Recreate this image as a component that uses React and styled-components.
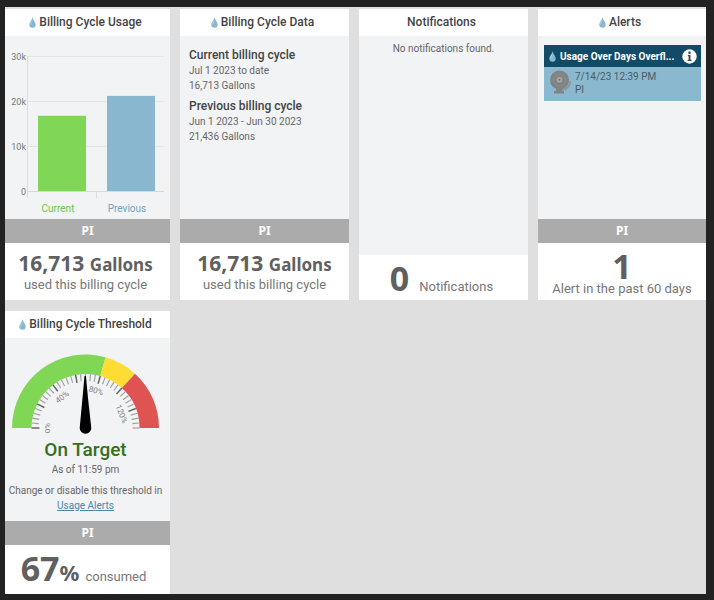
import React from 'react'
import styled, { createGlobalStyle } from 'styled-components'

const GlobalStyle = createGlobalStyle`
  * {
    box-sizing: border-box;
  }
  body {
    margin: 0;
    background: #222222;
    color: #666666;
    font-family: Roboto, sans-serif;
    font-size: 10px;
    line-height: 15px;
  }
  h2, h3, p {
    margin: 0;
  }
`

const Dashboard = styled.main`
  display: grid;
  grid-template-columns: 165fr 169fr 169fr 168fr;
  gap: 11px 10px;
  margin: 7px 8px 6px 5px;
  padding-top: 2px;
  background: #dfdfdf;
`

const Card = styled.section`
  display: flex;
  flex-direction: column;
  min-width: 0;
  background: #ffffff;
`

const CardTitle = styled.h2`
  display: flex;
  align-items: center;
  justify-content: center;
  gap: 3px;
  height: 27px;
  padding-right: 4px;
  color: #444444;
  font-size: 12px;
  font-weight: 500;
`

const CardBody = styled.div`
  flex: 1;
  min-height: 183px;
  padding: ${props => props.$pad || '0'};
  background: #f2f3f5;
  text-align: ${props => props.$align || 'left'};
`

const Location = styled.div`
  height: 24px;
  background: #ababab;
  color: #ffffff;
  font-family: "Noto Sans", sans-serif;
  font-size: 12px;
  font-weight: 700;
  line-height: 24px;
  text-align: center;
`

const CardFooter = styled.div`
  height: ${props => props.$height || '57px'};
  padding: ${props => props.$pad || '8px 0 0'};
  color: #777777;
  font-size: 13px;
  line-height: 16px;
  text-align: center;
`

const Total = styled.div`
  color: #606060;
  font-family: "Noto Sans", sans-serif;
  font-size: 21px;
  font-weight: 700;
  line-height: 24px;
`

const Unit = styled.span`
  font-size: ${props => props.$size || '17px'};
`

const Count = styled.span`
  display: ${props => (props.$block ? 'block' : 'inline')};
  margin-right: ${props => props.$space || '0'};
  color: #606060;
  font-family: "Noto Sans", sans-serif;
  font-size: 34px;
  font-weight: 700;
  line-height: 30px;
`

const CycleName = styled.h3`
  color: #444444;
  font-size: 12px;
  font-weight: 500;
  line-height: 15px;
`

const Cycle = styled.div`
  margin-bottom: 6px;
`

const Chart = styled.svg`
  display: block;
  width: 100%;
`

const Status = styled.p`
  color: #35701c;
  font-size: 19px;
  font-weight: 500;
  line-height: 25px;
`

const Note = styled.p`
  margin-top: ${props => props.$top || '0'};
  white-space: nowrap;
`

const Readout = styled.div`
  padding-right: 4px;
`

const Link = styled.a`
  color: #4c86a8;
`

const Alert = styled.article`
  background: #8ab8cf;
`

const AlertHeader = styled.header`
  display: flex;
  align-items: center;
  gap: 4px;
  height: 22px;
  padding: 0 4px 0 5px;
  background: #124b65;
  color: #ffffff;
`

const AlertTitle = styled.h3`
  flex: 1;
  font-size: 10px;
  font-weight: 700;
  white-space: nowrap;
`

const InfoButton = styled.button`
  display: flex;
  padding: 0;
  border: 0;
  background: none;
  cursor: pointer;
`

const AlertContent = styled.div`
  display: flex;
  gap: 2px;
  height: 34px;
  padding: 3px 5px;
  color: #4c5c65;
  line-height: 13px;
`

const Drop = () => (
  <svg width="7" height="11" viewBox="0 0 7 11" aria-hidden="true">
    <path d="M3.6 0.3 C4 3 6.7 5 6.7 7.5 A3.2 3.2 0 0 1 0.3 7.5 C0.3 5 3 3.3 3.6 0.3 Z" fill="#86b8cf" />
    <path d="M3.2 3.5 C2.2 5 1.5 6 1.6 7.6" fill="none" stroke="#b9dae7" strokeWidth="0.9" />
  </svg>
)

const Bell = () => (
  <svg width="24" height="26" viewBox="0 0 24 26" aria-hidden="true">
    <path d="M7 18 H13 V21 H15 V23.5 H5 V21 H7 Z" fill="#7f8587" />
    <path d="M21 11 C21.5 15.5 18 19.5 13 20" fill="none" stroke="#8a979d" strokeWidth="2" />
    <circle cx="10.5" cy="10" r="9.5" fill="#808384" />
    <circle cx="10.5" cy="10" r="6" fill="none" stroke="#8d9192" strokeWidth="0.8" />
    <circle cx="10.5" cy="9.8" r="2.8" fill="#a5a9aa" />
    <circle cx="10.5" cy="9.8" r="1" fill="#6b6d6e" />
  </svg>
)

const Info = () => (
  <svg width="15" height="15" viewBox="0 0 15 15" aria-hidden="true">
    <circle cx="7.5" cy="7.5" r="7.2" fill="#ffffff" />
    <circle cx="7.5" cy="3.7" r="1.3" fill="#3b4a52" />
    <path d="M5.8 6 H8.5 V10.8 H9.5 V12 H5.6 V10.8 H6.6 V7.2 H5.8 Z" fill="#3b4a52" />
  </svg>
)

const bars = [
  { label: 'Current', value: 16713, x: 33, color: '#80d655', text: '#6cc644' },
  { label: 'Previous', value: 21136, x: 102, color: '#89b7cf', text: '#6fa3c0' },
]

const UsageChart = () => {
  const base = 155
  const scale = 45 / 10000
  return (
    <Chart viewBox="0 0 165 183" role="img" aria-label="Billing Cycle Usage">
      {[0, 10, 20, 30].map(n => (
        <g key={n}>
          <path d={`M23 ${base - n * 4.5 + 0.5} H159`} stroke={n ? '#e3e5e7' : '#d3d9de'} />
          <text x="21" y={base - n * 4.5 + 4} fontSize="9" textAnchor="end" fill="#777777">{n ? `${n}k` : '0'}</text>
        </g>
      ))}
      <path d="M22.5 20 V162 M91.5 155 V162" stroke="#d9dee2" />
      {bars.map(bar => (
        <g key={bar.label}>
          <rect x={bar.x} y={base - bar.value * scale} width="48" height={bar.value * scale} fill={bar.color} />
          <text x={bar.x + 20} y="176" fontSize="10" textAnchor="middle" fill={bar.text}>{bar.label}</text>
        </g>
      ))}
    </Chart>
  )
}

const MAX = 136
const CX = 80.5
const CY = 90

const point = (percent, radius) => {
  const angle = Math.PI * (1 - percent / MAX)
  return `${CX + radius * Math.cos(angle)} ${CY - radius * Math.sin(angle)}`
}

const arc = (from, to) =>
  `M${point(from, 73.5)} A73.5 73.5 0 0 1 ${point(to, 73.5)} L${point(to, 54)} A54 54 0 0 0 ${point(from, 54)} Z`

const ticks = Array.from({ length: 35 }, (_, i) => i * 4)

const Gauge = () => (
  <Chart viewBox="0 0 165 99" role="img" aria-label="67% of threshold">
    <path d={arc(0, 80)} fill="#80d655" />
    <path d={arc(80, 100)} fill="#fddc33" />
    <path d={arc(100, MAX)} fill="#df5353" />
    {ticks.map(t => (
      <path
        key={t}
        d={`M${point(t, 54)} L${point(t, t % 20 ? 47 : 46)}`}
        stroke={t % 20 ? '#a2a2a2' : '#666666'}
        strokeWidth={t % 20 ? 1.2 : 1.5}
      />
    ))}
    {[0, 40, 80, 120].map(t => (
      <g key={t} transform={`translate(${point(t, 36)}) rotate(${(t / MAX) * 180 - 90})`}>
        <text fontSize="8" textAnchor="middle" fill="#808080">{t}%</text>
      </g>
    ))}
    <path d="M79.5 38 H80.9 L83 60 L86.3 90 A5.8 5.8 0 0 1 74.7 90 L77.5 60 Z" fill="#000000" />
  </Chart>
)

const App = () => {
  return (
    <>
      <GlobalStyle />
      <Dashboard>
        <Card>
          <CardTitle><Drop />Billing Cycle Usage</CardTitle>
          <CardBody><UsageChart /></CardBody>
          <Location>PI</Location>
          <CardFooter $pad="8px 4px 0 0">
            <Total>16,713 <Unit>Gallons</Unit></Total>
            used this billing cycle
          </CardFooter>
        </Card>

        <Card>
          <CardTitle><Drop />Billing Cycle Data</CardTitle>
          <CardBody $pad="12px 9px">
            <Cycle>
              <CycleName>Current billing cycle</CycleName>
              <p>Jul 1 2023 to date</p>
              <p>16,713 Gallons</p>
            </Cycle>
            <Cycle>
              <CycleName>Previous billing cycle</CycleName>
              <p>Jun 1 2023 - Jun 30 2023</p>
              <p>21,436 Gallons</p>
            </Cycle>
          </CardBody>
          <Location>PI</Location>
          <CardFooter>
            <Total>16,713 <Unit>Gallons</Unit></Total>
            used this billing cycle
          </CardFooter>
        </Card>

        <Card>
          <CardTitle>Notifications</CardTitle>
          <CardBody $pad="5px 9px" $align="center">No notifications found.</CardBody>
          <CardFooter $height="45px" $pad="8px 4px 0 0">
            <Count $space="10px">0</Count>Notifications
          </CardFooter>
        </Card>

        <Card>
          <CardTitle><Drop />Alerts</CardTitle>
          <CardBody $pad="9px 5px 9px 6px">
            <Alert>
              <AlertHeader>
                <Drop />
                <AlertTitle>Usage Over Days Overfl...</AlertTitle>
                <InfoButton type="button" aria-label="Alert details"><Info /></InfoButton>
              </AlertHeader>
              <AlertContent>
                <Bell />
                <div>
                  <p>7/14/23 12:39 PM</p>
                  <p>PI</p>
                </div>
              </AlertContent>
            </Alert>
          </CardBody>
          <Location>PI</Location>
          <CardFooter>
            <Count $block>1</Count>
            Alert in the past 60 days
          </CardFooter>
        </Card>

        <Card>
          <CardTitle><Drop />Billing Cycle Threshold</CardTitle>
          <CardBody $align="center">
            <Gauge />
            <Readout>
              <Status>On Target</Status>
              <Note>As of 11:59 pm</Note>
              <Note $top="6px">Change or disable this threshold in</Note>
              <Note><Link href="#alerts">Usage Alerts</Link></Note>
            </Readout>
          </CardBody>
          <Location>PI</Location>
          <CardFooter $height="49px" $pad="8px 8px 0 0">
            <Count $space="6px">67<Unit $size="22px">%</Unit></Count>consumed
          </CardFooter>
        </Card>
      </Dashboard>
    </>
  )
}

export default App
